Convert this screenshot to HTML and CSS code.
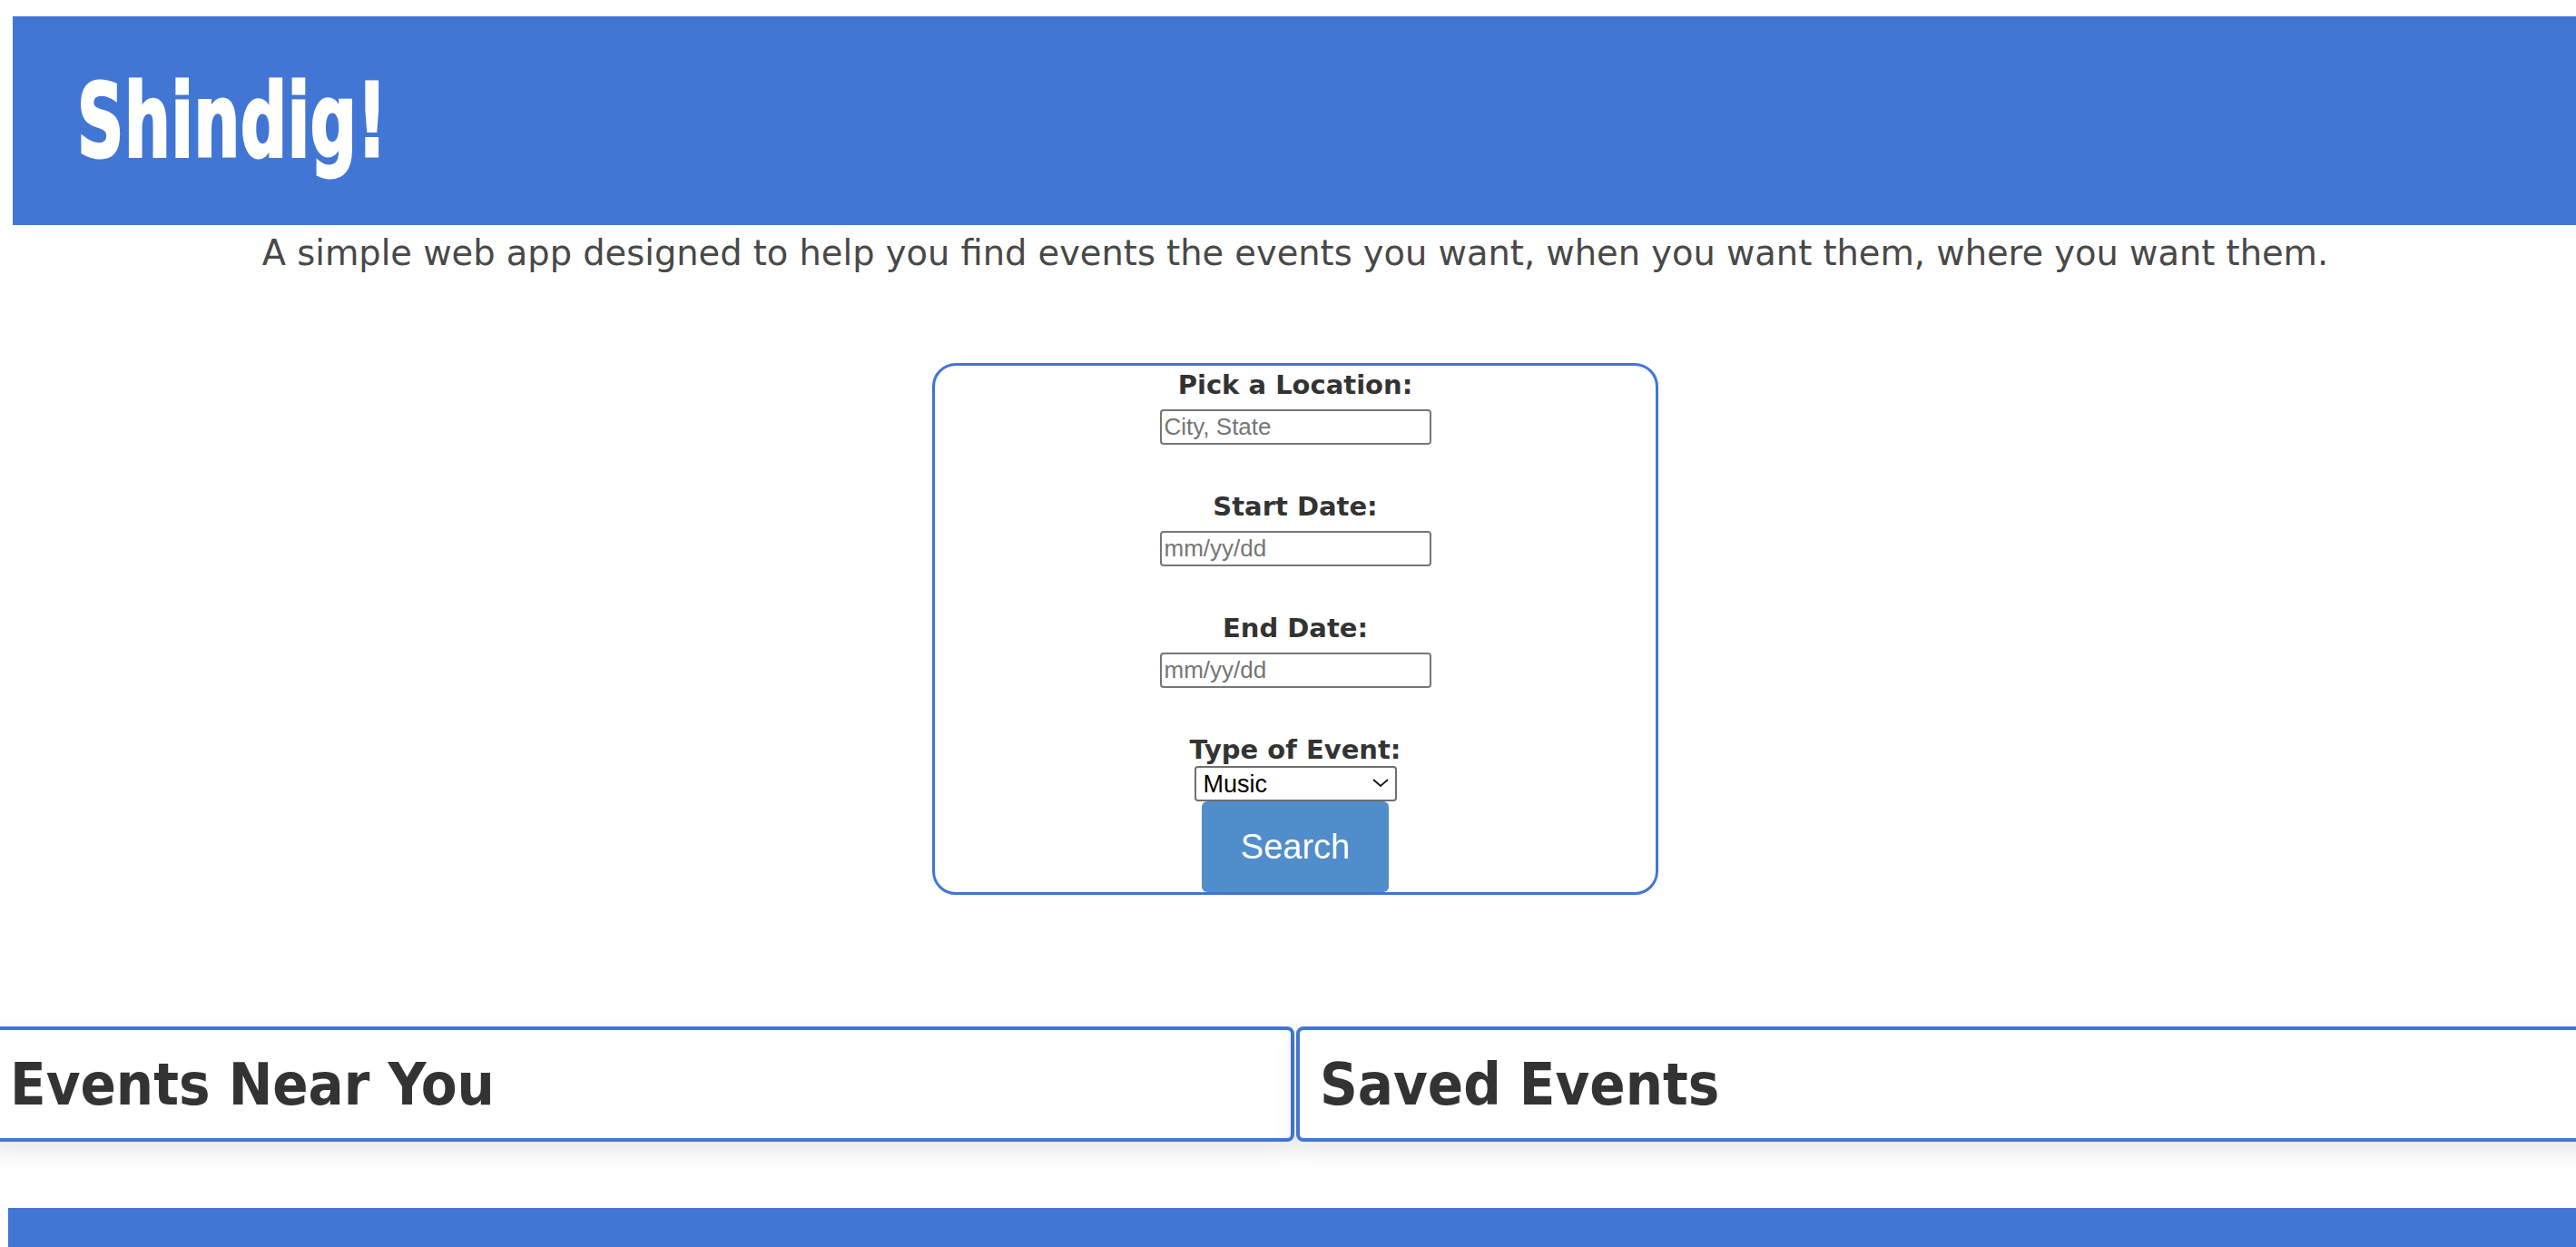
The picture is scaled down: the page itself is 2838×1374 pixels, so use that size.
FILE: index.html
```html
<!DOCTYPE html>
<html lang="en">
<head>
    <meta charset="UTF-8">
    <meta name="viewport" content="width=device-width, initial-scale=1.0">
    <title>Shindig!</title>
    <link rel="stylesheet" href="styles.css">
</head>
<body>
    <header>
        <h1 class="logo">Shindig!</h1>
    </header>

    <div class="content">
        <p class="tagline">A simple web app designed to help you find events the events you want, when you want them, where you want them.</p>

        <form id="search-form">
            <label for="location">Pick a Location:</label>
            <input type="text" id="location" placeholder="City, State">

            <label for="start-date" class="spaced">Start Date:</label>
            <input type="text" id="start-date" placeholder="mm/yy/dd">

            <label for="end-date" class="spaced">End Date:</label>
            <input type="text" id="end-date" placeholder="mm/yy/dd">

            <label for="event-type" class="spaced">Type of Event:</label>
            <div class="select-wrap">
                <select id="event-type">
                    <option>Music</option>
                    <option>Sports</option>
                    <option>Comedy</option>
                    <option>Theater</option>
                </select>
                <svg class="chevron" width="18" height="9" viewBox="0 0 18 9"><path d="M1 1 L9 8 L17 1" fill="none" stroke="#111" stroke-width="1.8"/></svg>
            </div>
            <button type="button" id="search-button">Search</button>
        </form>
    </div>

    <div class="events-row">
        <section class="events-box">
            <h2>Events Near You</h2>
        </section>
        <section class="events-box">
            <h2>Saved Events</h2>
        </section>
    </div>

    <footer></footer>
</body>
</html>
```

FILE: styles.css
```css
html, body {
    overflow: hidden;
}

body {
    margin: 0;
    padding: 0;
    font-family: "DejaVu Sans", Verdana, sans-serif;
    color: #333;
    background-color: white;
}

header {
    background-color: #4176d5;
    margin: 18px 0 0 14px;
    height: 230px;
    display: flex;
    align-items: center;
    padding-left: 71px;
}

.logo {
    margin: 0;
    color: white;
    font-family: "Liberation Sans Narrow", "DejaVu Sans Condensed", sans-serif;
    font-weight: bold;
    font-size: 112px;
    line-height: 1;
    display: inline-block;
    transform: scaleX(0.707);
    transform-origin: left center;
    -webkit-text-stroke: 3px white;
    letter-spacing: 1px;
}

.content {
    padding-left: 16px;
}

.tagline {
    margin: 7px 0 0 0;
    text-align: center;
    font-size: 38.4px;
    line-height: 48px;
    color: #484848;
}

#search-form {
    box-sizing: border-box;
    width: 800px;
    margin: 97px auto 0 auto;
    border: 3px solid #4176d5;
    border-radius: 26px;
    padding-top: 3px;
    display: flex;
    flex-direction: column;
    align-items: center;
}

#search-form label {
    font-family: "DejaVu Sans", Verdana, sans-serif;
    font-weight: bold;
    font-size: 29px;
    line-height: 36px;
    color: #333;
}

#search-form label.spaced {
    margin-top: 50px;
}

#search-form input {
    box-sizing: border-box;
    width: 299px;
    height: 39px;
    margin-top: 9px;
    padding: 0 3px;
    border: 2px solid #767676;
    border-radius: 4px;
    font-family: "Liberation Sans", Arial, sans-serif;
    font-size: 26px;
}

#search-form input::placeholder {
    color: #757575;
}

.select-wrap {
    position: relative;
    width: 223px;
    height: 39px;
}

#event-type {
    box-sizing: border-box;
    width: 100%;
    height: 100%;
    -webkit-appearance: none;
    appearance: none;
    background-color: white;
    border: 2px solid #6f6f6f;
    border-radius: 4px;
    padding: 0 0 0 8px;
    font-family: "Liberation Sans", Arial, sans-serif;
    font-size: 27px;
    color: black;
}

.chevron {
    position: absolute;
    right: 9px;
    top: 14px;
    pointer-events: none;
}

#search-button {
    width: 206px;
    height: 100px;
    background-color: #508dcb;
    color: white;
    border: none;
    border-radius: 6px;
    font-family: "Liberation Sans", Arial, sans-serif;
    font-size: 38px;
    cursor: pointer;
}

#search-button:hover {
    background-color: #4580c0;
}

.events-row {
    display: flex;
    gap: 2px;
    margin: 145px 0 0 -15px;
}

.events-box {
    flex: none;
    box-sizing: border-box;
    width: 1441px;
    height: 127px;
    border: 4px solid #4176d5;
    border-radius: 8px;
    padding-left: 22px;
    display: flex;
    align-items: center;
    box-shadow: 0 10px 26px rgba(0, 0, 0, 0.1);
    background-color: white;
}

.events-box h2 {
    margin: 0;
    font-family: "DejaVu Sans Condensed", "DejaVu Sans", sans-serif;
    font-weight: bold;
    font-size: 64.5px;
    color: #333;
}

footer {
    background-color: #4176d5;
    margin: 73px 0 0 9px;
    height: 44px;
}
```
